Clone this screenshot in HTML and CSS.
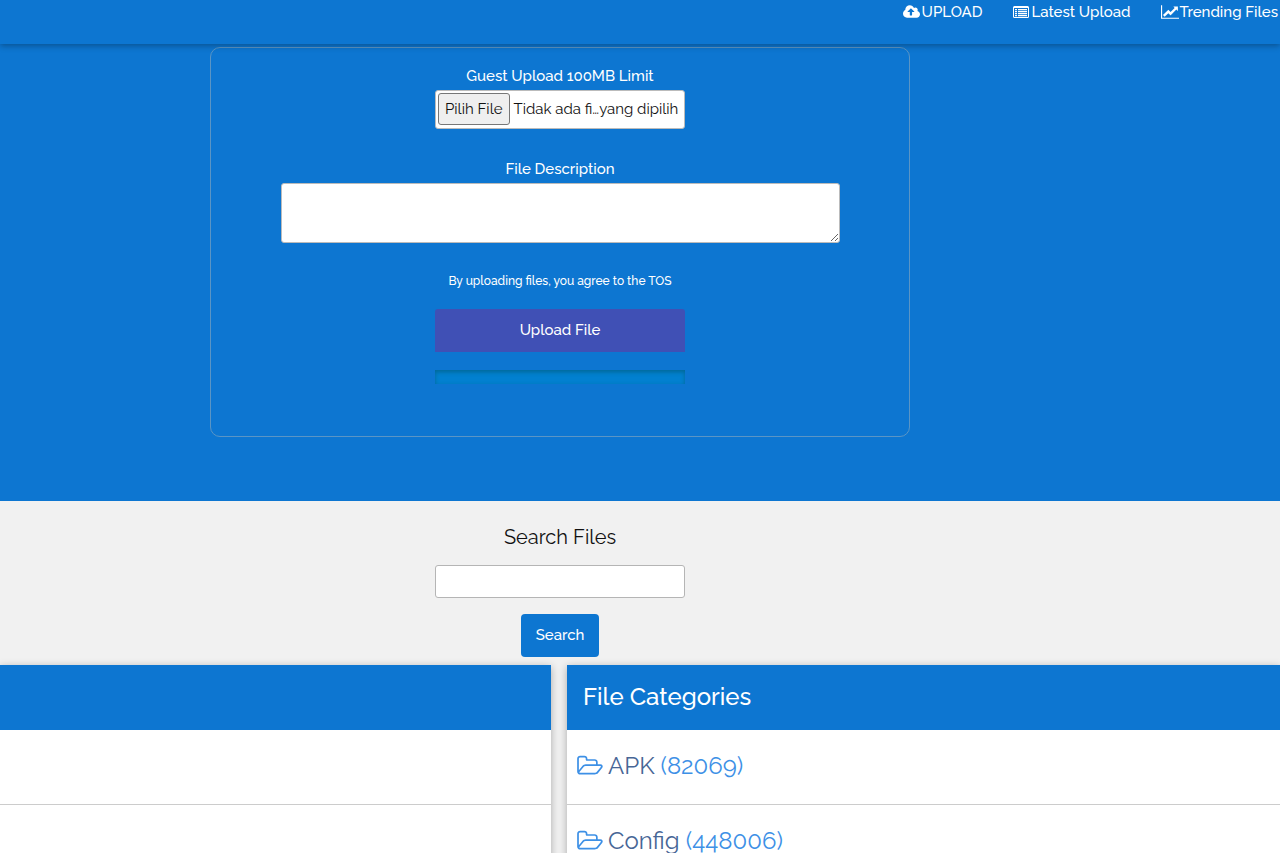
FILE: index.html
```html
<!DOCTYPE html>
<html lang="id">
<head>
<meta charset="utf-8">
<meta name="viewport" content="width=device-width, initial-scale=1">
<title>Upload File</title>
<link rel="stylesheet" href="styles.css">
</head>
<body>
<svg class="sprite" aria-hidden="true">
  <symbol id="cloud-upload" viewBox="0 0 1920 1792"><path d="M1280 864q0-14-9-23l-352-352q-9-9-23-9t-23 9l-351 351q-10 12-10 24 0 14 9 23t23 9h224v352q0 13 9.500 22.500t22.500 9.500h192q13 0 22.500-9.500t9.500-22.500v-352h224q13 0 22.500-9.500t9.500-22.500zm640 288q0 159-112.500 271.500t-271.500 112.500h-1088q-185 0-316.500-131.500t-131.500-316.500q0-130 70-240t188-165q-2-30-2-43 0-212 150-362t362-150q156 0 285.500 87t188.500 231q71-62 166-62 106 0 181 75t75 181q0 76-41 138 130 31 213.500 135.500t83.500 238.500z"/></symbol>
  <symbol id="list-alt" viewBox="0 0 16 16"><path fill-rule="evenodd" d="M1.500 2h13q1.500 0 1.500 1.500v9q0 1.500-1.500 1.500h-13q-1.500 0-1.500-1.500v-9q0-1.500 1.500-1.500zM1 4v8.500q0 .5.500.5h13q.5 0 .5-.5v-8.500z"/><path d="M2 5h2v1.300h-2zM5 5h9v1.300h-9zM2 7h2v1.300h-2zM5 7h9v1.300h-9zM2 9h2v1.300h-2zM5 9h9v1.300h-9zM2 11h2v1.300h-2zM5 11h9v1.300h-9z"/></symbol>
  <symbol id="line-chart" viewBox="0 0 2048 1792"><path d="M2048 1536v128h-2048v-1536h128v1408h1920zm-128-1248v435q0 21-19.500 29.500t-35.500-7.500l-121-121-633 633q-10 10-23 10t-23-10l-233-233-416 416-192-192 585-585q10-10 23-10t23 10l233 233 464-464-121-121q-16-16-7.500-35.500t29.500-19.500h435q14 0 23 9t9 23z"/></symbol>
  <symbol id="folder-open" viewBox="0 0 1973 1792"><path d="M1845 931q0-35-53-35h-1088q-40 0-85.500 21.500t-71.500 52.500l-294 363q-18 24-18 40 0 35 53 35h1088q40 0 86-22t71-53l294-363q18-22 18-39zm-1141-163h768v-160q0-40-28-68t-68-28h-576q-40 0-68-28t-28-68v-64q0-40-28-68t-68-28h-320q-40 0-68 28t-28 68v853l256-315q44-53 116-87.500t140-34.500zm1269 163q0 62-46 120l-295 363q-43 53-116 87.500t-140 34.500h-1088q-92 0-158-66t-66-158v-960q0-92 66-158t158-66h320q92 0 158 66t66 158v32h544q92 0 158 66t66 158v160h192q54 0 99 24.500t67 70.500q15 32 15 68z"/></symbol>
</svg>
<header class="topbar">
  <nav class="nav">
    <a class="nav-link" href="#upload"><svg class="icon"><use href="#cloud-upload"/></svg>UPLOAD</a>
    <a class="nav-link" href="#latest"><svg class="icon icon-list"><use href="#list-alt"/></svg>Latest Upload</a>
    <a class="nav-link nav-link-tight" href="#trending"><svg class="icon icon-wide"><use href="#line-chart"/></svg>Trending Files</a>
  </nav>
</header>
<main>
  <section class="hero" id="upload">
    <form class="upload-panel">
      <label class="label" for="file">Guest Upload 100MB Limit</label>
      <div class="file-box">
        <span class="file-button">Pilih File</span>
        <span class="file-name">Tidak ada fi…yang dipilih</span>
        <input class="file-input" id="file" type="file">
      </div>
      <label class="label" for="description">File Description</label>
      <textarea class="description" id="description"></textarea>
      <p class="terms">By uploading files, you agree to the TOS</p>
      <button class="upload-button" type="button">Upload File</button>
      <div class="progress" role="progressbar" aria-label="Upload progress" aria-valuenow="0"></div>
    </form>
  </section>
  <form class="search">
    <label class="search-title" for="query">Search Files</label>
    <input class="search-input" id="query" type="text">
    <button class="search-button" type="button">Search</button>
  </form>
  <div class="columns">
    <section class="card" id="latest">
      <div class="card-header"></div>
      <div class="row"></div>
      <div class="row"></div>
    </section>
    <section class="card">
      <h2 class="card-header">File Categories</h2>
      <a class="row" href="#apk"><svg class="folder"><use href="#folder-open"/></svg><span>APK <span class="count">(82069)</span></span></a>
      <a class="row" href="#config"><svg class="folder"><use href="#folder-open"/></svg><span>Config <span class="count">(448006)</span></span></a>
    </section>
  </div>
</main>
</body>
</html>
```
FILE: styles.css
```css
* { box-sizing: border-box; }
body {
  margin: 0;
  height: 100vh;
  overflow: hidden;
  background: #f1f1f1;
  color: #111;
  font-family: Raleway, Lato, sans-serif;
  font-size: 15px;
  line-height: 24px;
}
button, input, textarea { font: inherit; }
a { color: inherit; text-decoration: none; }
.sprite { position: absolute; width: 0; height: 0; }
.topbar {
  position: relative;
  z-index: 1;
  display: flex;
  justify-content: flex-end;
  height: 44px;
  padding-right: 2px;
  background: #0d76d1;
  color: #fff;
  font-weight: 500;
  box-shadow: 0 2px 6px rgba(0, 0, 0, .3);
}
.nav { display: flex; gap: 31px; }
.nav-link { display: flex; align-items: center; height: 24px; gap: 2px; white-space: nowrap; }
.nav-link-tight { gap: 0; }
.icon { width: 17px; height: 16px; fill: currentColor; }
.icon-list { width: 16px; }
.icon-wide { width: 18px; }
.hero { height: 457px; padding: 3px 160px 0 0; background: #0d76d1; color: #fff; }
.upload-panel {
  display: flex;
  flex-direction: column;
  align-items: center;
  max-width: 700px;
  height: 390px;
  margin: 0 auto;
  padding: 16px 24px 0;
  border: 1px solid #5a95c5;
  border-radius: 10px;
  font-weight: 500;
}
.label { margin-bottom: 2px; }
.file-box {
  position: relative;
  display: flex;
  align-items: center;
  gap: 4px;
  width: 250px;
  height: 39px;
  margin-bottom: 28px;
  padding: 1px 2px 2px;
  border: 1px solid #bbb;
  border-radius: 3px;
  background: #fff;
  color: #111;
  font-weight: 400;
  white-space: nowrap;
}
.file-button {
  padding: 3px 6px;
  border: 1px solid #777;
  border-radius: 3px;
  background: #efefef;
}
.file-input { position: absolute; inset: 0; width: 100%; opacity: 0; }
.description {
  width: 86%;
  height: 60px;
  border: 1px solid #bbb;
  border-radius: 3px;
  background: #fff;
}
.terms { margin: 26px 0 16px; font-size: 12px; }
.upload-button {
  width: 250px;
  height: 43px;
  padding: 0 0 2px;
  border: 0;
  border-radius: 3px 3px 0 0;
  background: #4050b5;
  color: #fff;
}
.progress {
  width: 250px;
  height: 14px;
  margin-top: 18px;
  background: #0280d0;
  box-shadow: inset 0 2px 4px rgba(0, 80, 90, .5);
}
.search {
  display: flex;
  flex-direction: column;
  align-items: center;
  padding: 20px 160px 8px 0;
}
.search-title { font-size: 20px; line-height: 32px; }
.search-input {
  width: 250px;
  height: 33px;
  margin: 12px 0 16px;
  border: 1px solid #b5b5b5;
  border-radius: 3px;
  background: #fff;
}
.search-button {
  height: 43px;
  padding: 0 15px 2px;
  border: 0;
  border-radius: 4px;
  background: #0d76d1;
  color: #fff;
  font-weight: 500;
}
.columns { display: grid; grid-template-columns: 551fr 713fr; gap: 16px; }
.card { background: #fff; box-shadow: 0 2px 8px rgba(0, 0, 0, .3); }
.card-header {
  height: 65px;
  margin: 0;
  padding: 16px;
  background: #0d76d1;
  color: #fff;
  font-size: 24px;
  font-weight: 500;
  line-height: 32px;
}
.row {
  display: flex;
  align-items: center;
  gap: 5px;
  height: 75px;
  padding: 0 9px 3px;
  border-bottom: 1px solid #ccc;
  color: #476696;
  font-size: 24px;
  line-height: 32px;
}
.folder { width: 27px; height: 24px; fill: #3d90e6; }
.count { color: #3d90e6; }
```
